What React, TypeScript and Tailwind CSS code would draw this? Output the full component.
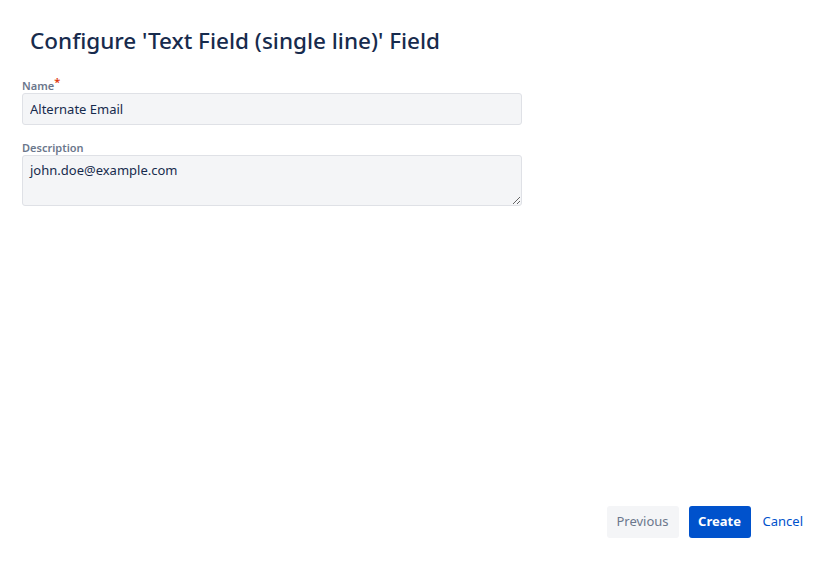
export default function App() {
  return (
    <div
      className="flex h-[562px] w-[837px] flex-col bg-white text-[#172b4d]"
      style={{ fontFamily: '"Noto Sans", "Open Sans", sans-serif' }}
    >
      <div className="pl-[30px] pt-[25px]">
        <h1 className="text-[22.5px] font-medium leading-[32px] text-[#172b4d]">
          Configure 'Text Field (single line)' Field
        </h1>
      </div>

      <form className="flex w-[522px] flex-col pl-[22px] pt-[22px]">
        <label className="text-[11px] font-semibold leading-[14px] text-[#6b778c]">
          Name<span className="relative -top-[4px] text-[#de350b]">*</span>
        </label>
        <input
          defaultValue="Alternate Email"
          className="h-[32px] w-[500px] rounded-[3px] border border-[#dfe1e6] bg-[#f4f5f7] px-[7px] text-[13px] text-[#172b4d] outline-none"
        />

        <label className="mt-[16px] text-[11px] font-semibold leading-[14px] text-[#6b778c]">
          Description
        </label>
        <textarea
          defaultValue="john.doe@example.com"
          className="h-[51px] w-[500px] rounded-[3px] border border-[#dfe1e6] bg-[#f4f5f7] px-[7px] py-[4px] text-[13px] leading-[20px] text-[#172b4d] outline-none"
        />
      </form>

      <div className="mt-auto flex items-center justify-end pb-[24px] pr-[32px]">
        <button className="h-[32px] w-[72px] rounded-[3px] bg-[#f4f5f7] text-[13px] text-[#6b778c]">
          Previous
        </button>
        <button className="ml-[10px] h-[32px] w-[62px] rounded-[3px] bg-[#0052cc] text-[13px] font-bold text-white">
          Create
        </button>
        <button className="ml-[10px] h-[32px] px-[2px] text-[13px] text-[#0052cc]">Cancel</button>
      </div>
    </div>
  );
}
